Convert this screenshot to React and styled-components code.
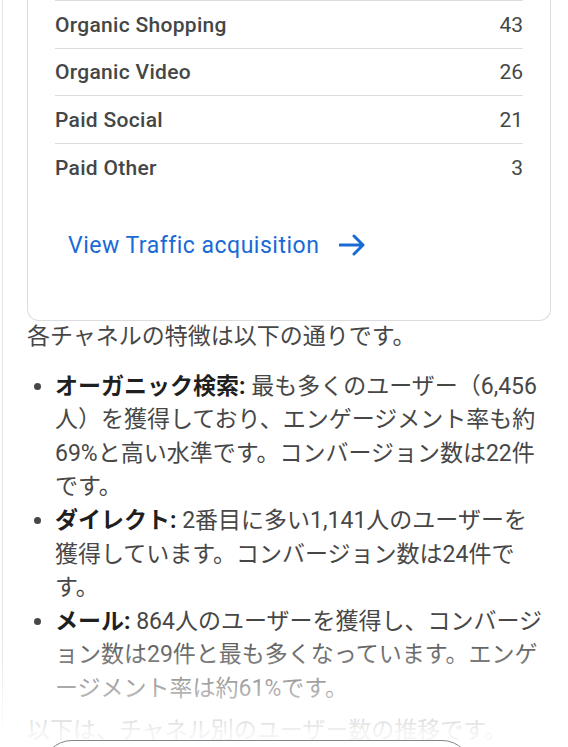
import React from "react"
import styled, { createGlobalStyle } from "styled-components"

const GlobalStyle = createGlobalStyle`
  html, body {
    margin: 0;
    padding: 0;
    background: #fff;
    overflow: hidden;
  }
  body {
    font-family: Roboto, "Noto Sans CJK JP", sans-serif;
  }
`

const Page = styled.div`
  position: relative;
  width: 568px;
  height: 747px;
  overflow: hidden;
  box-sizing: border-box;
`

const Column = styled.div`
  margin-left: 2px;
  border-left: 1px solid #e3e3e3;
  min-height: 747px;
  padding: 0 17px 0 24px;
  box-sizing: border-box;
`

const Card = styled.div`
  border: 1px solid #dadce0;
  border-top: none;
  border-radius: 0 0 12px 12px;
  padding: 0 27px 61px 27px;
`

const Row = styled.div`
  display: flex;
  justify-content: space-between;
  align-items: center;
  height: 47px;
  border-top: 1px solid #dadce0;
  font-size: 21px;
  color: #444746;
  &:nth-child(2) { height: 46px; }
`

const Label = styled.span`
  font-weight: 500;
  letter-spacing: 0.3px;
`

const Value = styled.span`
  font-weight: 400;
`

const Link = styled.a`
  display: flex;
  align-items: center;
  gap: 20px;
  margin: 40px 0 0 13px;
  height: 28px;
  color: #1a6ad6;
  font-size: 23px;
  font-weight: 400;
  text-decoration: none;
  letter-spacing: 0.5px;
`

const Text = styled.p`
  margin: ${({ $top }) => $top || "0"} 0 0 0;
  font-size: 23px;
  line-height: 33.6px;
  color: #474747;
`

const List = styled.ul`
  margin: 16px 0 0 0;
  padding: 0 5px 0 28px;
  font-size: 23px;
  line-height: 33.6px;
  color: #474747;
`

const Item = styled.li`
  margin: 0;
  b {
    color: #1f1f1f;
    font-weight: 700;
  }
`

const Fade = styled.div`
  position: absolute;
  left: 0;
  right: 0;
  top: 630px;
  bottom: 0;
  background: linear-gradient(
    to bottom,
    rgba(255, 255, 255, 0) 0%,
    rgba(255, 255, 255, 0.55) 50%,
    rgba(255, 255, 255, 0.94) 88%
  );
  pointer-events: none;
`

const InputBar = styled.div`
  position: absolute;
  top: 740px;
  left: 42px;
  width: 428px;
  height: 64px;
  border: 1.5px solid #80868b;
  border-radius: 30px;
  background: #fff;
`

const rows = [
  ["Organic Shopping", 43],
  ["Organic Video", 26],
  ["Paid Social", 21],
  ["Paid Other", 3],
]

const Arrow = () => (
  <svg width="27" height="22" viewBox="0 0 27 22" fill="none">
    <path
      d="M1 11H24M15 2L24 11L15 20"
      stroke="#1a6ad6"
      strokeWidth="3"
      strokeLinecap="round"
      strokeLinejoin="round"
    />
  </svg>
)

export default function App() {
  return (
    <Page>
      <GlobalStyle />
      <Column>
        <Card>
          {rows.map(([name, n]) => (
            <Row key={name}>
              <Label>{name}</Label>
              <Value>{n}</Value>
            </Row>
          ))}
          <Link href="#">
            View Traffic acquisition
            <Arrow />
          </Link>
        </Card>
        <Text $top="-1px">各チャネルの特徴は以下の通りです。</Text>
        <List>
          <Item>
            <b>オーガニック検索:</b> 最も多くのユーザー（6,456人）を獲得しており、エンゲージメント率も約69%と高い水準です。コンバージョン数は22件です。
          </Item>
          <Item>
            <b>ダイレクト:</b> 2番目に多い1,141人のユーザーを獲得しています。コンバージョン数は24件です。
          </Item>
          <Item>
            <b>メール:</b> 864人のユーザーを獲得し、コンバージョン数は29件と最も多くなっています。エンゲージメント率は約61%です。
          </Item>
        </List>
        <Text $top="8px">以下は、チャネル別のユーザー数の推移です。</Text>
      </Column>
      <Fade />
      <InputBar />
    </Page>
  )
}
